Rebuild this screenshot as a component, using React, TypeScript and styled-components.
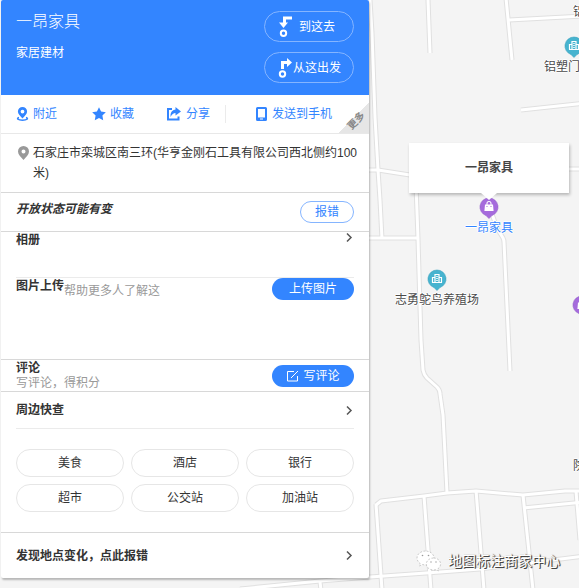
import React from 'react';
import styled, { createGlobalStyle, css } from 'styled-components';

const BLUE = '#3385ff';

const GlobalStyle = createGlobalStyle`
  * { box-sizing: border-box; }
  body {
    margin: 0;
    background: #f4f4f4;
    color: #333;
    font: 12px/16px "Liberation Sans", "Noto Sans CJK SC", sans-serif;
  }
  h1, h2, p { margin: 0; }
  a { color: inherit; text-decoration: none; }
  button { font: inherit; padding: 0; cursor: pointer; }
  svg { display: block; flex: none; }
`;

const Page = styled.main`
  position: relative;
  min-height: 100vh;
  padding: 0 0 10px 1px;
  overflow: hidden;
`;

/* ---------- map ---------- */

const MapCanvas = styled.div`
  position: absolute;
  inset: 0;
  overflow: hidden;
  background: #f4f4f4;
`;

const Roads = styled.svg`
  position: absolute;
  inset: 0;
  fill: none;
  stroke-linejoin: round;
`;

const Marker = styled.div<{ $x: number; $y: number }>`
  position: absolute;
  left: ${(p) => p.$x}px;
  top: ${(p) => p.$y}px;
  display: flex;
  flex-direction: column;
  align-items: center;
  gap: 1px;
  transform: translateX(-50%);
`;

const MapLabel = styled.span<{ $active?: boolean }>`
  white-space: nowrap;
  color: ${(p) => (p.$active ? BLUE : '#4a4a4a')};
  text-shadow: 1px 0 #fff, -1px 0 #fff, 0 1px #fff, 0 -1px #fff;
`;

const FreeLabel = styled(MapLabel)<{ $x: number; $y: number }>`
  position: absolute;
  left: ${(p) => p.$x}px;
  top: ${(p) => p.$y}px;
`;

const Callout = styled.div`
  position: absolute;
  left: 409px;
  top: 143px;
  width: 160px;
  padding: 16px;
  background: #fff;
  box-shadow: 1px 2px 3px rgba(0, 0, 0, 0.25);
  line-height: 18px;
  text-align: center;
  font-weight: 700;
  color: #444;

  &::after {
    content: '';
    position: absolute;
    top: 100%;
    left: 50%;
    margin-left: -8px;
    border: 8px solid transparent;
    border-top: 7px solid #fff;
    border-bottom: 0;
  }
`;

const Watermark = styled.div`
  position: absolute;
  right: 19px;
  bottom: 16px;
  display: flex;
  align-items: center;
  gap: 6px;
  font-size: 14px;
  line-height: 22px;
  color: #fff;
  text-shadow: 1px 1px 0 #444, 1px 0 1px #555;
`;

const roadPaths = [
  'M370 0L372 33L375 117L378 170L380 200L382 239',
  'M428 0L430 53',
  'M506 -2L512 60',
  'M509 20L585 16',
  'M521 110L585 103',
  'M365 170H378L410 175',
  'M560 169H585',
  'M416 185L418 239L421 340L423 370Q424 375 427 378L437 387Q440 390 440 394L443 415L447 493',
  'M365 238H418',
  'M492 214L497 228L503 238Q504 240 504 242L510 371',
  'M376 505L381 501L424 496L447 493L476 491L523 495L565 491H585',
  'M376 504L382 590',
  'M424 496L431 590',
  'M476 490L484 590',
  'M523 495L533 590',
  'M523 508L585 502',
  'M576 491L580 540',
  'M240 589L320 581L370 577L440 572L480 569L585 556',
  'M320 582L321 590',
];

function PinIcon({ kind }: { kind: 'shop' | 'company' }) {
  const shop = kind === 'shop';
  return (
    <svg width="20" height="22" viewBox="0 0 20 22" aria-hidden="true">
      <path
        d="M10 1a9 9 0 0 1 3 17.500L10 21.500L7 18.500A9 9 0 0 1 10 1z"
        fill={shop ? '#a56bdc' : '#46b3cf'}
        stroke={shop ? '#9460c9' : '#3da3be'}
        strokeWidth="0.6"
      />
      {shop ? (
        <>
          <path d="M6 7.500h8l.6 6.500H5.400z" fill="#fff" />
          <path d="M8 8V6.500a2 2 0 0 1 4 0V8" fill="none" stroke="#fff" strokeWidth="1.100" />
          <path d="M8 9v1M12 9v1" stroke="#a56bdc" />
        </>
      ) : (
        <>
          <path d="M5.500 13.500V8.500H8M8 13.500V5.500h4v8M12 8.500h2.500v5M5 13.500h10" fill="none" stroke="#fff" strokeWidth="1.200" />
          <path d="M10 7v1M10 9v1M10 11v1" stroke="#fff" strokeWidth="1.500" />
        </>
      )}
    </svg>
  );
}

function WechatIcon() {
  return (
    <svg width="26" height="22" viewBox="0 0 26 22" aria-hidden="true">
      <g fill="#fff" stroke="#aaa" strokeWidth="0.6" strokeDasharray="2 1.500">
        <path d="M9.500 1C4.800 1 1 4.100 1 8c0 2.200 1.200 4.100 3.100 5.400L3.400 16l3-1.500c1 .3 2 .5 3.100.5 4.700 0 8.500-3.100 8.500-7S14.200 1 9.500 1z" />
        <path d="M17.500 8c-4 0-7.200 2.700-7.200 6s3.200 6 7.200 6c.9 0 1.800-.1 2.600-.4l2.500 1.300-.6-2.200c1.600-1.100 2.600-2.800 2.600-4.700 0-3.300-3.100-6-7.100-6z" />
      </g>
      <g fill="#999">
        <circle cx="6.500" cy="5.500" r="0.8" />
        <circle cx="12.500" cy="5.500" r="0.8" />
        <circle cx="15" cy="12" r="0.7" />
        <circle cx="20" cy="12" r="0.7" />
      </g>
    </svg>
  );
}

function MapView() {
  return (
    <MapCanvas>
      <Roads width="100%" height="100%" aria-hidden="true">
        <g stroke="#e0e0e0" strokeWidth="5">
          {roadPaths.map((d) => <path key={d} d={d} />)}
        </g>
        <g stroke="#fff" strokeWidth="3">
          {roadPaths.map((d) => <path key={d} d={d} />)}
        </g>
      </Roads>
      <FreeLabel $x={573} $y={4}>铝</FreeLabel>
      <FreeLabel $x={573} $y={458}>院</FreeLabel>
      <Marker $x={574} $y={36}>
        <PinIcon kind="company" />
        <MapLabel>铝塑门窗厂</MapLabel>
      </Marker>
      <Marker $x={437} $y={269}>
        <PinIcon kind="company" />
        <MapLabel>志勇鸵鸟养殖场</MapLabel>
      </Marker>
      <Marker $x={582} $y={295}>
        <PinIcon kind="shop" />
      </Marker>
      <Marker $x={489} $y={197}>
        <PinIcon kind="shop" />
        <MapLabel $active>一昂家具</MapLabel>
      </Marker>
      <Callout>一昂家具</Callout>
      <Watermark>
        <WechatIcon />
        地图标注商家中心
      </Watermark>
    </MapCanvas>
  );
}

/* ---------- detail panel ---------- */

const Panel = styled.article`
  position: relative;
  width: 100%;
  max-width: 368px;
  background: #fff;
  border-radius: 2px;
  box-shadow: 1px 2px 2px rgba(0, 0, 0, 0.25);
`;

const Header = styled.header`
  display: flex;
  justify-content: space-between;
  padding: 11px 15px 12px;
  background: ${BLUE};
  border-radius: 2px 2px 0 0;
  color: #fff;
`;

const PlaceName = styled.h1`
  margin-bottom: 10px;
  font-size: 16px;
  line-height: 22px;
  font-weight: 300;
`;

const Category = styled.p`
  line-height: 20px;
`;

const RouteButtons = styled.div`
  display: flex;
  flex-direction: column;
  gap: 10px;
`;

const RouteButton = styled.button`
  display: flex;
  align-items: center;
  width: 90px;
  height: 31px;
  padding: 0 11px 0 13px;
  border: 1px solid #85b5ff;
  border-radius: 16px;
  background: none;
  color: #fff;

  span { flex: 1; text-align: center; white-space: nowrap; }
`;

const Toolbar = styled.nav`
  position: relative;
  display: flex;
  align-items: center;
  height: 39px;
  padding-left: 15px;
  border-bottom: 1px solid #e8e8e8;
  color: ${BLUE};
`;

const Tool = styled.a<{ $gap: number }>`
  display: flex;
  align-items: center;
  gap: 4px;
  margin-right: ${(p) => p.$gap}px;
  white-space: nowrap;
`;

const ToolDivider = styled.span`
  width: 1px;
  height: 18px;
  margin-right: 29px;
  background: #ebebeb;
`;

const MoreCorner = styled.button`
  position: absolute;
  right: 0;
  bottom: 0;
  width: 30px;
  height: 30px;
  border: 0;
  overflow: hidden;
  background: linear-gradient(135deg, transparent 50%, #e6e6e6 50%);
  color: #888;
  font-size: 10px;
  font-weight: 700;
  line-height: 12px;

  span {
    display: block;
    padding-top: 7px;
    transform: rotate(-45deg);
  }
`;

const Section = styled.section`
  padding: 0 15px;
  border-bottom: 1px solid #d8d8d8;
`;

const Address = styled(Section)`
  display: flex;
  gap: 4px;
  padding: 9px 11px 9px 17px;
  line-height: 20px;

  svg { margin-top: 3px; }
`;

const Row = styled.div<{ $height?: number; $align?: string; $rule?: boolean }>`
  display: flex;
  justify-content: space-between;
  align-items: ${(p) => p.$align || 'flex-start'};
  ${(p) => p.$height && css`min-height: ${p.$height}px;`}
  ${(p) => p.$rule && css`border-bottom: 1px solid #ebebeb;`}
`;

const Status = styled(Section)`
  display: flex;
  justify-content: space-between;
  padding-top: 8px;
  padding-bottom: 8px;
`;

const Notice = styled.em`
  font-weight: 700;
`;

const Title = styled.h2`
  font-size: 12px;
  line-height: 16px;
  font-weight: 700;
`;

const Hint = styled.p`
  line-height: 15px;
  color: #999;
`;

const UploadText = styled.div`
  display: flex;

  ${Hint} { padding-top: 6px; }
`;

const OutlineButton = styled.button`
  width: 54px;
  height: 22px;
  border: 1px solid #85b5ff;
  border-radius: 11px;
  background: #fff;
  color: ${BLUE};
`;

const SolidButton = styled.button`
  display: flex;
  align-items: center;
  justify-content: center;
  gap: 4px;
  width: 82px;
  height: 22px;
  border: 0;
  border-radius: 11px;
  background: ${BLUE};
  color: #fff;
`;

const ArrowButton = styled.button`
  border: 0;
  background: none;
`;

const ChipGrid = styled.div`
  display: grid;
  grid-template-columns: repeat(3, 1fr);
  gap: 7px;
  padding: 20px 0;
`;

const Chip = styled.a`
  display: flex;
  align-items: center;
  justify-content: center;
  height: 28px;
  border: 1px solid #e6e6e6;
  border-radius: 14px;
`;

const Footer = styled.footer`
  padding: 0 15px;
`;

function Arrow({ label }: { label: string }) {
  return (
    <ArrowButton type="button" aria-label={label}>
      <svg width="10" height="11" viewBox="0 0 10 11" fill="none" stroke="#555" strokeWidth="1.500">
        <path d="M3 1.500L7 5.500L3 9.500" />
      </svg>
    </ArrowButton>
  );
}

function LocationIcon({ base }: { base?: boolean }) {
  return (
    <svg width={base ? 13 : 11} height="14" viewBox={base ? '-1 0 13 14' : '0 0 11 14'} aria-hidden="true">
      {base ? (
        <>
          <path fillRule="evenodd" fill={BLUE} d="M5.500 0a4.600 4.600 0 0 1 4.600 4.600c0 2.200-2 4.400-4.600 6.900C2.900 9 .9 6.800.9 4.600A4.600 4.600 0 0 1 5.500 0zm0 2.700a1.900 1.900 0 1 0 0 3.800 1.900 1.900 0 0 0 0-3.800z" />
          <path d="M2 10.500C-1 11.500 1 13.200 5.500 13.200s6.500-1.700 3.500-2.700" fill="none" stroke={BLUE} strokeWidth="1.500" />
        </>
      ) : (
        <path fillRule="evenodd" fill="#999" d="M5.500 0A5.500 5.500 0 0 1 11 5.500c0 3-2.800 5.500-5.500 8.500C2.800 11 0 8.500 0 5.500A5.500 5.500 0 0 1 5.500 0zm0 3.500a2 2 0 1 0 0 4 2 2 0 0 0 0-4z" />
      )}
    </svg>
  );
}

const nearby = ['美食', '酒店', '银行', '超市', '公交站', '加油站'];

export default function App() {
  return (
    <Page>
      <GlobalStyle />
      <MapView />
      <Panel>
        <Header>
          <div>
            <PlaceName>一昂家具</PlaceName>
            <Category>家居建材</Category>
          </div>
          <RouteButtons>
            <RouteButton type="button">
              <svg width="14" height="21" viewBox="0 0 14 21" aria-hidden="true">
                <path d="M14 2H6.500V7" fill="none" stroke="#fff" strokeWidth="3" />
                <path d="M1 6.500h9L5.500 12z" fill="#fff" />
                <circle cx="5.500" cy="17.200" r="2.700" fill="none" stroke="#fff" strokeWidth="2" />
              </svg>
              <span>到这去</span>
            </RouteButton>
            <RouteButton type="button">
              <svg width="14" height="21" viewBox="0 0 14 21" aria-hidden="true">
                <path d="M4.500 12V5.500H10" fill="none" stroke="#fff" strokeWidth="3" />
                <path d="M9 1l5 4.500L9 10z" fill="#fff" />
                <circle cx="4.500" cy="17" r="2.700" fill="none" stroke="#fff" strokeWidth="2" />
              </svg>
              <span>从这出发</span>
            </RouteButton>
          </RouteButtons>
        </Header>

        <Toolbar>
          <Tool href="#nearby" $gap={35}>
            <LocationIcon base />
            附近
          </Tool>
          <Tool href="#favorite" $gap={32}>
            <svg width="14" height="14" viewBox="0 0 14 14" fill={BLUE} aria-hidden="true">
              <path d="M7 .3l2.100 4.300 4.700.7-3.400 3.300.8 4.700L7 11.100l-4.200 2.200.8-4.700L.2 5.300l4.700-.7z" />
            </svg>
            收藏
          </Tool>
          <Tool href="#share" $gap={15}>
            <svg width="16" height="14" viewBox="0 0 16 14" aria-hidden="true">
              <path d="M6 2H2V12.500H12.500V9.500" fill="none" stroke={BLUE} strokeWidth="2" />
              <path d="M9.500 0L15 4.500L9.500 8.500V6Q6.500 6 4.500 10Q4 3 9.500 2.500z" fill={BLUE} />
            </svg>
            分享
          </Tool>
          <ToolDivider />
          <Tool href="#send" $gap={0}>
            <svg width="13" height="14" viewBox="0 0 13 14" aria-hidden="true">
              <rect x="2" y="1" width="9" height="12" rx="0.5" fill="none" stroke={BLUE} strokeWidth="2" />
              <path d="M2 11.500h9" stroke={BLUE} strokeWidth="2" />
              <path d="M5 12h3" stroke="#fff" />
            </svg>
            发送到手机
          </Tool>
          <MoreCorner type="button"><span>更多</span></MoreCorner>
        </Toolbar>

        <Address>
          <LocationIcon />
          <p>石家庄市栾城区南三环(华亨金刚石工具有限公司西北侧约100米)</p>
        </Address>

        <Status>
          <Notice>开放状态可能有变</Notice>
          <OutlineButton type="button">报错</OutlineButton>
        </Status>

        <Section>
          <Row $height={46} $rule>
            <Title>相册</Title>
            <Arrow label="相册" />
          </Row>
          <Row $height={81}>
            <UploadText>
              <Title>图片上传</Title>
              <Hint>帮助更多人了解这</Hint>
            </UploadText>
            <SolidButton type="button">上传图片</SolidButton>
          </Row>
        </Section>

        <Section>
          <Row $align="center">
            <div>
              <Title>评论</Title>
              <Hint>写评论，得积分</Hint>
            </div>
            <SolidButton type="button">
              <svg width="13" height="12" viewBox="0 0 13 12" fill="none" stroke="#fff" aria-hidden="true">
                <path d="M8 1.500H1.500V11H11.500V6M5 8L12 1" />
              </svg>
              写评论
            </SolidButton>
          </Row>
        </Section>

        <Section id="nearby">
          <Row $height={37} $align="center" $rule>
            <Title>周边快查</Title>
            <Arrow label="周边快查" />
          </Row>
          <ChipGrid>
            {nearby.map((name) => <Chip key={name} href="#nearby">{name}</Chip>)}
          </ChipGrid>
        </Section>

        <Footer>
          <Row $height={45} $align="center">
            <Title>发现地点变化，点此报错</Title>
            <Arrow label="报错" />
          </Row>
        </Footer>
      </Panel>
    </Page>
  );
}
